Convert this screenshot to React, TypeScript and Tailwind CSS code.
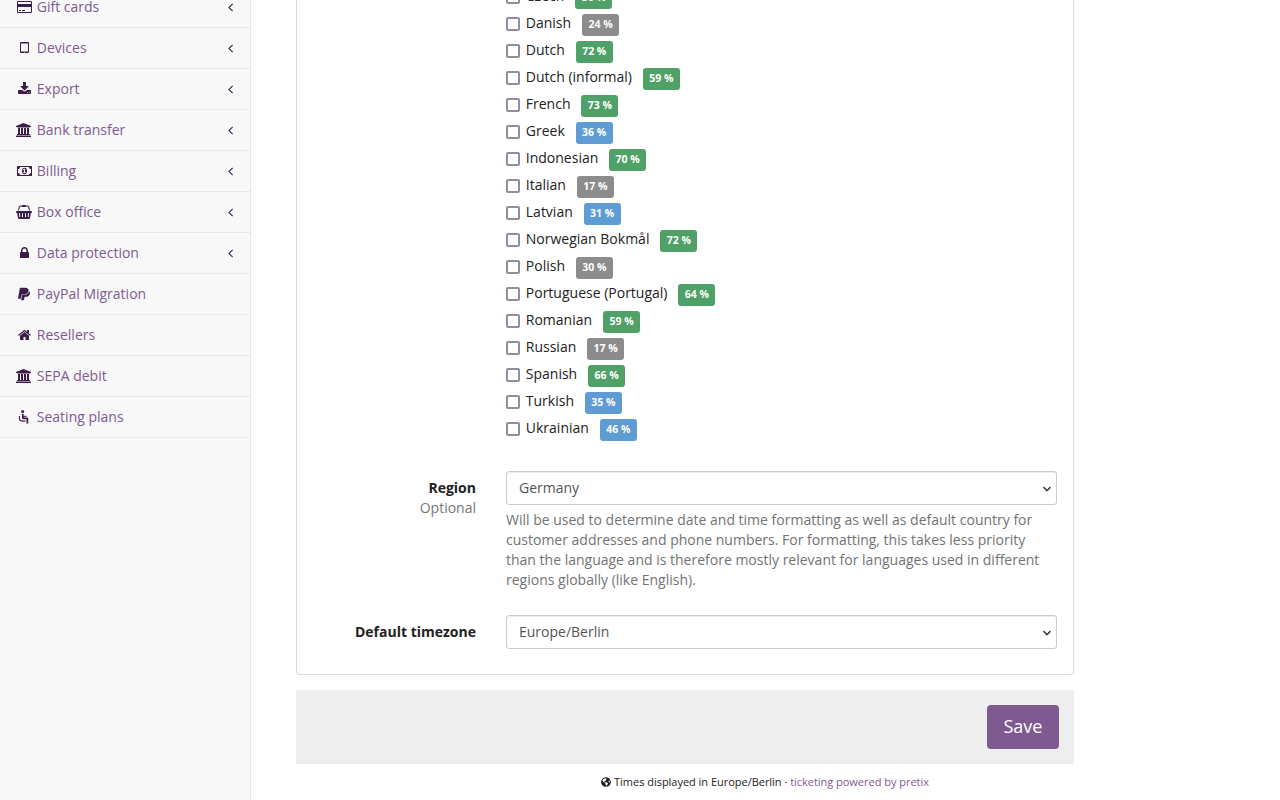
import { FaPaypal, FaGlobeAmericas } from "react-icons/fa";

type Glyph = { width: number; d: string };

const glyphs: Record<string, Glyph> = {
  card: { width: 1920, d: "M1760 1408q66 0 113-47t47-113v-1216q0-66-47-113t-113-47h-1600q-66 0-113 47t-47 113v1216q0 66 47 113t113 47h1600zM160 1280q-13 0-22.5-9.5t-9.5-22.5v-224h1664v224q0 13-9.5 22.5t-22.5 9.5h-1600zM1760 0q13 0 22.5 9.5t9.5 22.5v608h-1664v-608q0-13 9.5-22.5t22.5-9.5h1600zM256 128v128h256v-128h-256zM640 128v128h384v-128h-384z" },
  tablet: { width: 1152, d: "M640 64q0 26-19 45t-45 19t-45-19t-19-45t19-45t45-19t45 19t19 45zM1024 224v960q0 13-9.5 22.5t-22.5 9.5h-832q-13 0-22.5-9.5t-9.5-22.5v-960q0-13 9.5-22.5t22.5-9.5h832q13 0 22.5 9.5t9.5 22.5zM1152 1248v-1088q0-66-47-113t-113-47h-832q-66 0-113 47t-47 113v1088q0 66 47 113t113 47h832q66 0 113-47t47-113z" },
  download: { width: 1664, d: "M1280 192q0 26-19 45t-45 19t-45-19t-19-45t19-45t45-19t45 19t19 45zM1536 192q0 26-19 45t-45 19t-45-19t-19-45t19-45t45-19t45 19t19 45zM1664 416v-320q0-40-28-68t-68-28h-1472q-40 0-68 28t-28 68v320q0 40 28 68t68 28h465l135-136q58-56 136-56t136 56l136 136h464q40 0 68-28t28-68zM1339 985q17-41-14-70l-448-448q-18-19-45-19t-45 19l-448 448q-31 29-14 70q17 39 59 39h256v448q0 26 19 45t45 19h256q26 0 45-19t19-45v-448h256q42 0 59-39z" },
  bank: { width: 2048, d: "M960 1536l960-384v-128h-128q0-26-20.5-45t-48.5-19h-1526q-28 0-48.5 19t-20.5 45h-128v128zM256 896h256v-768h128v768h256v-768h128v768h256v-768h128v768h256v-768h59q28 0 48.5-19t20.5-45v-64h-1664v64q0 26 20.5 45t48.5 19h59v768zM1851-64q28 0 48.5-19t20.5-45v-128h-1920v128q0 26 20.5 45t48.5 19h1782z" },
  money: { width: 1920, d: "M768 384h384v96h-128v448h-114l-148-137l77-80q42 37 55 57h2v-288h-128v-96zM1280 640q0-70-21-142t-59.5-134t-101.5-101t-138-39t-138 39t-101.5 101t-59.5 134t-21 142t21 142t59.5 134t101.5 101t138 39t138-39t101.5-101t59.5-134t21-142zM1792 384v512q-106 0-181 75t-75 181h-1152q0-106-75-181t-181-75v-512q106 0 181-75t75-181h1152q0 106 75 181t181 75zM1920 1216v-1152q0-26-19-45t-45-19h-1792q-26 0-45 19t-19 45v1152q0 26 19 45t45 19h1792q26 0 45-19t19-45z" },
  basket: { width: 2048, d: "M1920 768q53 0 90.5-37.5t37.5-90.5t-37.5-90.5t-90.5-37.5h-15l-115-662q-8-46-44-76t-82-30h-1280q-46 0-82 30t-44 76l-115 662h-15q-53 0-90.5 37.5t-37.5 90.5t37.5 90.5t90.5 37.5h1792zM485-32q26 2 43.5 22.5t15.5 46.5l-32 416q-2 26-22.5 43.5t-46.5 15.5t-43.5-22.5t-15.5-46.5l32-416q2-25 20.5-42t43.5-17h5zM896 32v416q0 26-19 45t-45 19t-45-19t-19-45v-416q0-26 19-45t45-19t45 19t19 45zM1280 32v416q0 26-19 45t-45 19t-45-19t-19-45v-416q0-26 19-45t45-19t45 19t19 45zM1632 27l32 416q2 26-15.5 46.5t-43.5 22.5t-46.5-15.5t-22.5-43.5l-32-416q-2-26 15.5-46.5t43.5-22.5h5q25 0 43.5 17t20.5 42zM476 1244l-93-412h-132l101 441q19 88 89 143.5t160 55.5h167q0 26 19 45t45 19h384q26 0 45-19t19-45h167q90 0 160-55.5t89-143.5l101-441h-132l-93 412q-11 44-45.5 72t-79.5 28h-167q0-26-19-45t-45-19h-384q-26 0-45 19t-19 45h-167q-45 0-79.5-28t-45.5-72z" },
  lock: { width: 1152, d: "M320 768h512v192q0 106-75 181t-181 75t-181-75t-75-181v-192zM1152 672v-576q0-40-28-68t-68-28h-960q-40 0-68 28t-28 68v576q0 40 28 68t68 28h32v192q0 184 132 316t316 132t316-132t132-316v-192h32q40 0 68-28t28-68z" },
  home: { width: 1664, d: "M1408 544v-480q0-26-19-45t-45-19h-384v384h-256v-384h-384q-26 0-45 19t-19 45v480q0 1 .5 3t.5 3l575 474l575-474q1-2 1-6zM1631 613l-62-74q-8-9-21-11h-3q-13 0-21 7l-692 577l-692-577q-12-8-24-7q-13 2-21 11l-62 74q-8 10-7 23.5t11 21.5l719 599q32 26 76 26t76-26l244-204v195q0 14 9 23t23 9h192q14 0 23-9t9-23v-408l219-182q10-8 11-21.5t-7-23.5z" },
  angle: { width: 640, d: "M627 992q0-13-10-23l-393-393l393-393q10-10 10-23t-10-23l-50-50q-10-10-23-10t-23 10l-466 466q-10 10-10 23t10 23l466 466q10 10 23 10t23-10l50-50q10-10 10-23z" },
};

function SeatIcon() {
  return (
    <svg viewBox="0 0 12 14" className="h-[14px] w-[12px] shrink-0" fill="none" stroke="currentColor">
      <circle cx="4.7" cy="1.6" r="1.5" fill="currentColor" stroke="none" />
      <path d="M4.7 3.8L5 8.4h4.4v5.2" strokeWidth="1.7" strokeLinejoin="round" />
      <path d="M5 6.3h3.6" strokeWidth="1" />
      <path d="M1.4 6v2.2Q1.6 10.9 4.2 11.1h3.3" strokeWidth="1.1" />
    </svg>
  );
}

function Icon({ name }: { name: string }) {
  if (name === "paypal") return <FaPaypal preserveAspectRatio="none" className="h-[14px] w-[12px]" />;
  if (name === "seat") return <SeatIcon />;
  const g = glyphs[name];
  return (
    <svg
      viewBox={`0 0 ${g.width} 1792`}
      style={{ width: g.width / 128, height: 14 }}
      className="shrink-0 overflow-visible"
      fill="currentColor"
    >
      <path transform="translate(0 1536) scale(1 -1)" d={g.d} />
    </svg>
  );
}

const nav: [string, string, boolean][] = [
  ["Gift cards", "card", true],
  ["Devices", "tablet", true],
  ["Export", "download", true],
  ["Bank transfer", "bank", true],
  ["Billing", "money", true],
  ["Box office", "basket", true],
  ["Data protection", "lock", true],
  ["PayPal Migration", "paypal", false],
  ["Resellers", "home", false],
  ["SEPA debit", "bank", false],
  ["Seating plans", "seat", false],
];

const languages: [string, number][] = [
  ["Czech", 56],
  ["Danish", 24],
  ["Dutch", 72],
  ["Dutch (informal)", 59],
  ["French", 73],
  ["Greek", 36],
  ["Indonesian", 70],
  ["Italian", 17],
  ["Latvian", 31],
  ["Norwegian Bokmål", 72],
  ["Polish", 30],
  ["Portuguese (Portugal)", 64],
  ["Romanian", 59],
  ["Russian", 17],
  ["Spanish", 66],
  ["Turkish", 35],
  ["Ukrainian", 46],
];

function badgeColor(percent: number) {
  if (percent > 50) return "bg-[#50a167]";
  if (percent > 30) return "bg-[#5f9cd4]";
  return "bg-[#8c8c8c]";
}

function Select({ value }: { value: string }) {
  return (
    <div className="flex h-[34px] items-center justify-between rounded-[3px] border border-[#ccc] bg-white pr-[5px] pl-3 text-[#555] shadow-[inset_0_1px_1px_rgba(0,0,0,0.075)]">
      <span>{value}</span>
      <svg viewBox="0 0 8 6" className="mt-px h-[6px] w-[8px]" fill="none" stroke="#444" strokeWidth="1.6">
        <path d="M.5 1L4 4.5 7.5 1" />
      </svg>
    </div>
  );
}

export default function App() {
  return (
    <div className="flex h-[800px] w-[1280px] overflow-hidden bg-white font-['Open_Sans',sans-serif] text-[14px] leading-[20px] text-[#222] antialiased">
      <nav className="h-full w-[251px] shrink-0 border-r border-[#e7e7e7] bg-[#f8f8f8]">
        <ul className="-mt-[13px]">
          {nav.map(([label, icon, expandable]) => (
            <li key={label} className="flex h-[41px] items-center border-b border-[#e7e7e7] pr-[17.5px] pl-[15px] text-[#7f5a91]">
              <span className="mr-[3.8px] flex w-[18px] shrink-0 justify-center text-[#3b1c4a]">
                <Icon name={icon} />
              </span>
              <span className="grow">{label}</span>
              {expandable && (
                <span className="flex text-[#3b1c4a]">
                  <Icon name="angle" />
                </span>
              )}
            </li>
          ))}
        </ul>
      </nav>
      <main className="ml-[45px] w-[778px] shrink-0">
        <div className="h-[675px] overflow-hidden rounded-b-[4px] border border-t-0 border-[#ddd]">
          <div className="-mt-[17px] ml-[209px]">
            {languages.map(([name, percent]) => (
              <label key={name} className="flex h-[27px] items-start">
                <span className="mt-[7px] h-[14px] w-[14px] shrink-0 rounded-[2px] border-2 border-[#8f8f9d] bg-white" />
                <span className="mt-[3px] ml-[5.8px]">{name}</span>
                <span className={`mt-[4px] ml-[11px] flex h-[22px] items-center rounded-[3px] px-[6.3px] pb-[2px] text-[10.5px] font-bold text-white ${badgeColor(percent)}`}>
                  {percent} %
                </span>
              </label>
            ))}
          </div>
          <div className="mt-[29px] flex h-[144px] pr-4">
            <div className="w-[179px] shrink-0 pt-[7px] text-right">
              <div className="font-bold">Region</div>
              <div className="text-[#777]">Optional</div>
            </div>
            <div className="ml-[30px] grow">
              <Select value="Germany" />
              <p className="mt-[5px] text-[#737373]">
                Will be used to determine date and time formatting as well as default country for customer addresses and phone numbers. For formatting, this takes less priority than the language and is therefore mostly relevant for languages used in different regions globally (like English).
              </p>
            </div>
          </div>
          <div className="flex pr-4">
            <div className="w-[179px] shrink-0 pt-[7px] text-right font-bold">Default timezone</div>
            <div className="ml-[30px] grow">
              <Select value="Europe/Berlin" />
            </div>
          </div>
        </div>
        <div className="mt-[15px] flex h-[74px] items-center justify-end bg-[#eee] pr-[15px]">
          <button className="h-[44px] w-[72px] rounded-[4px] bg-[#7f5a91] pb-[2px] text-[18px] text-white">Save</button>
        </div>
        <footer className="mt-[10px] flex items-center justify-center pl-[160px] text-[11px] leading-[16px]">
          <FaGlobeAmericas className="mr-[3px] h-[10px] w-[10px]" />
          <span className="tracking-[-0.025px]">
            Times displayed in Europe/Berlin · <a className="text-[#7f5a91]">ticketing powered by pretix</a>
          </span>
        </footer>
      </main>
    </div>
  );
}
